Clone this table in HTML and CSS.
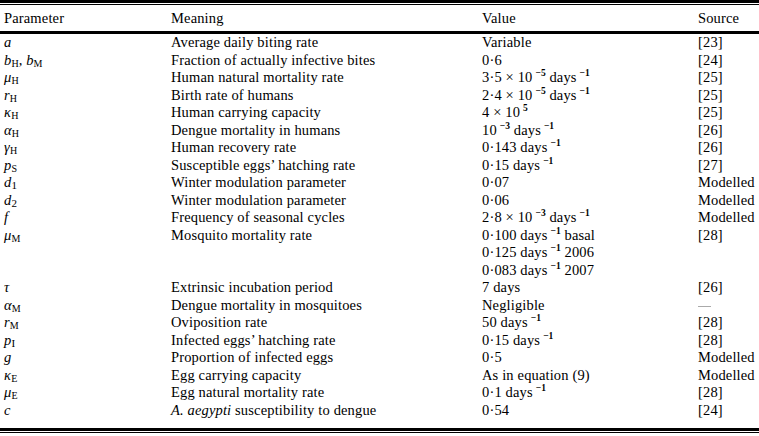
FILE: index.html
```html
<!DOCTYPE html>
<html lang="en">
<head>
<meta charset="utf-8">
<title>Parameters</title>
<link rel="stylesheet" href="styles.css">
</head>
<body>
<div class="tbl">
  <div class="rule-thick"></div>
  <div class="rule-thin"></div>
  <div class="head">
    <div class="cell">Parameter</div><div class="cell">Meaning</div><div class="cell">Value</div><div class="cell">Source</div>
  </div>
  <div class="rule-thick"></div>
  <div class="body">
    <div class="cell"><i>a</i></div><div class="cell">Average daily biting rate</div><div class="cell">Variable</div><div class="cell">[23]</div>
    <div class="cell"><i>b</i><sub>H</sub>, <i>b</i><sub>M</sub></div><div class="cell">Fraction of actually infective bites</div><div class="cell">0·6</div><div class="cell">[24]</div>
    <div class="cell"><i>μ</i><sub>H</sub></div><div class="cell">Human natural mortality rate</div><div class="cell">3·5 × 10<sup>−5</sup> days<sup>−1</sup></div><div class="cell">[25]</div>
    <div class="cell"><i>r</i><sub>H</sub></div><div class="cell">Birth rate of humans</div><div class="cell">2·4 × 10<sup>−5</sup> days<sup>−1</sup></div><div class="cell">[25]</div>
    <div class="cell"><i>κ</i><sub>H</sub></div><div class="cell">Human carrying capacity</div><div class="cell">4 × 10<sup>5</sup></div><div class="cell">[25]</div>
    <div class="cell"><i>α</i><sub>H</sub></div><div class="cell">Dengue mortality in humans</div><div class="cell">10<sup>−3</sup> days<sup>−1</sup></div><div class="cell">[26]</div>
    <div class="cell"><i>γ</i><sub>H</sub></div><div class="cell">Human recovery rate</div><div class="cell">0·143 days<sup>−1</sup></div><div class="cell">[26]</div>
    <div class="cell"><i>p</i><sub>S</sub></div><div class="cell">Susceptible eggs’ hatching rate</div><div class="cell">0·15 days<sup>−1</sup></div><div class="cell">[27]</div>
    <div class="cell"><i>d</i><sub class="n">1</sub></div><div class="cell">Winter modulation parameter</div><div class="cell">0·07</div><div class="cell">Modelled</div>
    <div class="cell"><i>d</i><sub class="n">2</sub></div><div class="cell">Winter modulation parameter</div><div class="cell">0·06</div><div class="cell">Modelled</div>
    <div class="cell"><i>f</i></div><div class="cell">Frequency of seasonal cycles</div><div class="cell">2·8 × 10<sup>−3</sup> days<sup>−1</sup></div><div class="cell">Modelled</div>
    <div class="cell"><i>μ</i><sub>M</sub></div><div class="cell">Mosquito mortality rate</div><div class="cell">0·100 days<sup>−1</sup> basal</div><div class="cell">[28]</div>
    <div class="cell"></div><div class="cell"></div><div class="cell">0·125 days<sup>−1</sup> 2006</div><div class="cell"></div>
    <div class="cell"></div><div class="cell"></div><div class="cell">0·083 days<sup>−1</sup> 2007</div><div class="cell"></div>
    <div class="cell"><i>τ</i></div><div class="cell">Extrinsic incubation period</div><div class="cell">7 days</div><div class="cell">[26]</div>
    <div class="cell"><i>α</i><sub>M</sub></div><div class="cell">Dengue mortality in mosquitoes</div><div class="cell">Negligible</div><div class="cell"><span class="dash"></span></div>
    <div class="cell"><i>r</i><sub>M</sub></div><div class="cell">Oviposition rate</div><div class="cell">50 days<sup>−1</sup></div><div class="cell">[28]</div>
    <div class="cell"><i>p</i><sub class="n">I</sub></div><div class="cell">Infected eggs’ hatching rate</div><div class="cell">0·15 days<sup>−1</sup></div><div class="cell">[28]</div>
    <div class="cell"><i>g</i></div><div class="cell">Proportion of infected eggs</div><div class="cell">0·5</div><div class="cell">Modelled</div>
    <div class="cell"><i>κ</i><sub>E</sub></div><div class="cell">Egg carrying capacity</div><div class="cell">As in equation (9)</div><div class="cell">Modelled</div>
    <div class="cell"><i>μ</i><sub>E</sub></div><div class="cell">Egg natural mortality rate</div><div class="cell">0·1 days<sup>−1</sup></div><div class="cell">[28]</div>
    <div class="cell"><i>c</i></div><div class="cell"><i>A. aegypti</i> susceptibility to dengue</div><div class="cell">0·54</div><div class="cell">[24]</div>
  </div>
  <div class="rule-thick"></div>
  <div class="rule-thin"></div>
</div>
</body>
</html>
```
FILE: styles.css
```css
html, body {
  margin: 0;
  padding: 0;
  background: #fff;
}
body {
  width: 759px;
  height: 436px;
  overflow: hidden;
  font-family: "Liberation Serif", "Times New Roman", serif;
  font-size: 14.5px;
  letter-spacing: 0.15px;
  color: #000;
}
.tbl {
  display: flex;
  flex-direction: column;
  width: 759px;
}
.rule-thick {
  height: 3px;
  background: #000;
  flex: none;
}
.rule-thin {
  height: 1px;
  background: #000;
  margin-top: 1px;
  flex: none;
}
.head,
.body {
  display: grid;
  grid-template-columns: 167px 311px 216px 61px;
  padding-left: 4px;
}
.head {
  height: 26px;
  align-items: center;
}
.body {
  grid-auto-rows: 17.5px;
  align-items: center;
  padding-bottom: 9px;
}
.cell {
  white-space: nowrap;
  line-height: 17px;
}
sub, sup {
  line-height: 0;
  position: relative;
  vertical-align: baseline;
  letter-spacing: 0;
}
sub {
  font-size: 10px;
  top: 2px;
}
sub.n { font-size: 11px; }
sup {
  font-size: 9.5px;
  top: -6px;
  margin-left: 3px;
  font-weight: bold;
}
.dash {
  display: inline-block;
  width: 13px;
  height: 1px;
  background: #aaa;
  vertical-align: middle;
}
```
